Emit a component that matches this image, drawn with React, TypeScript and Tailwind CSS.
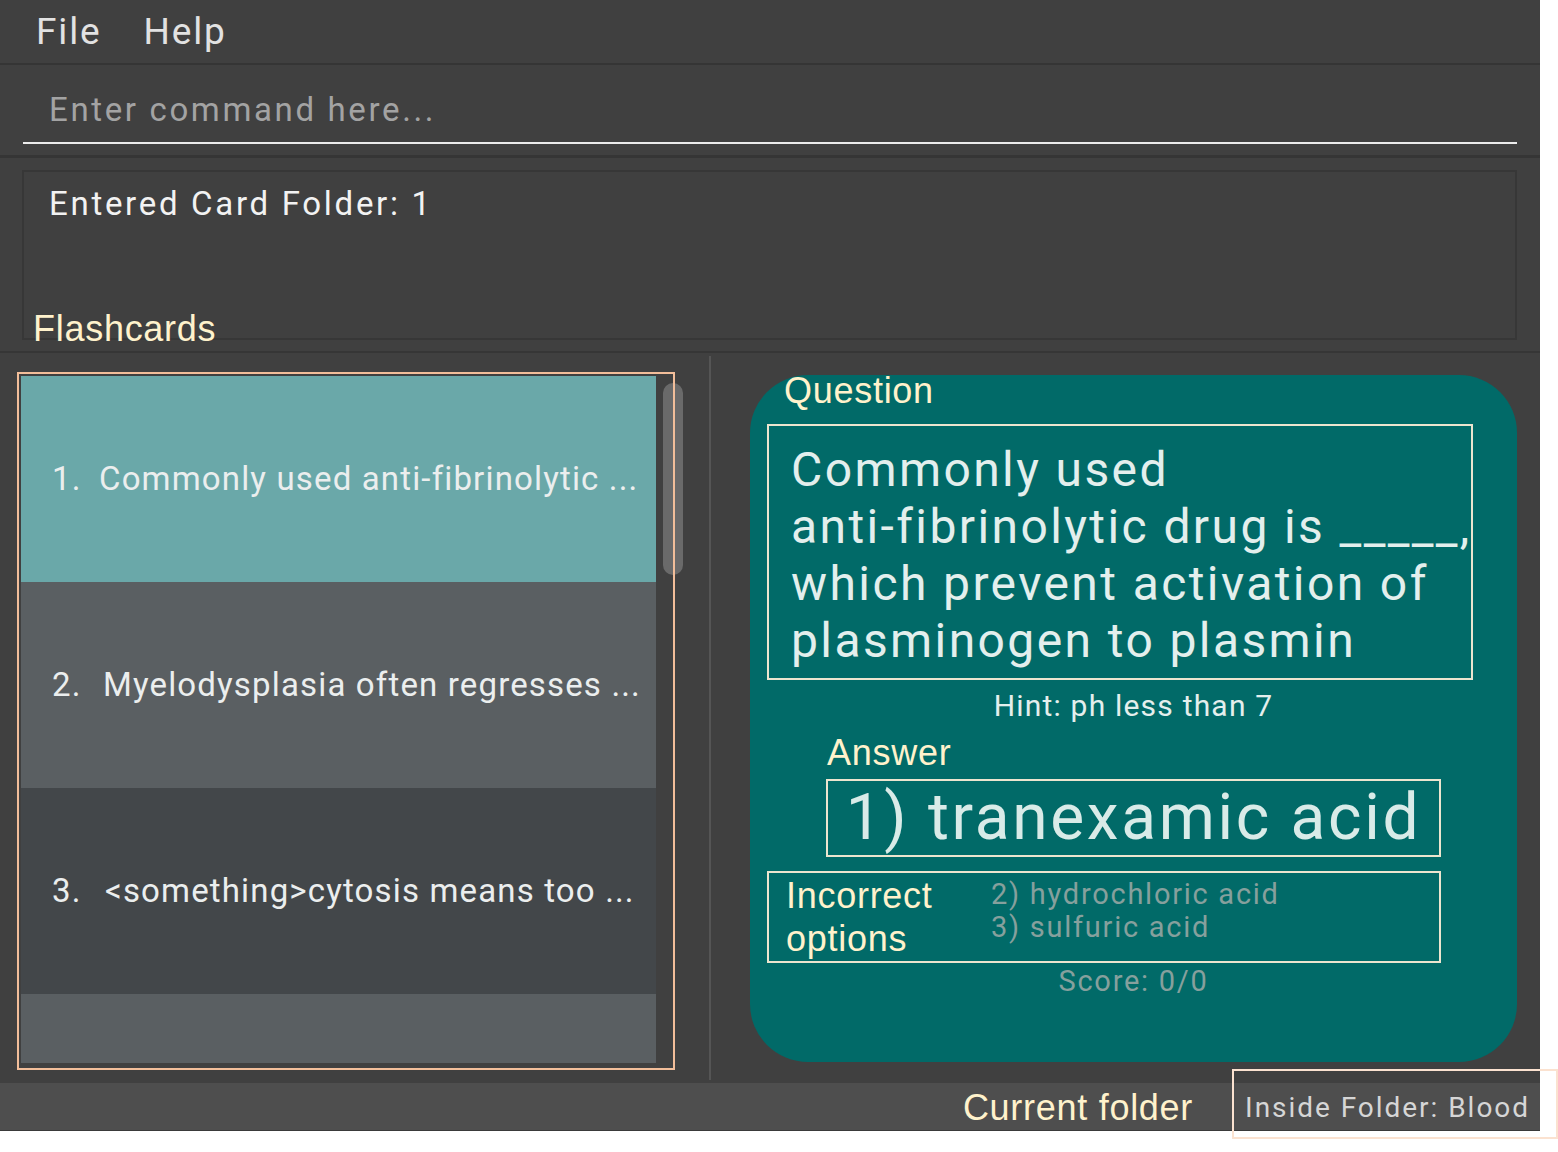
export default function App() {
  const ui = "[font-family:Roboto,'Liberation_Sans',Arial,sans-serif]";
  const label = "[font-family:'Liberation_Sans',Arial,sans-serif] text-[#fff2cc] text-[36px] leading-none tracking-[0.02em]";
  const cells = [
    { n: "1.", t: "Commonly used anti-fibrinolytic ...", bg: "bg-[#6aa8a9]", w: "w-[47px]" },
    { n: "2.", t: "Myelodysplasia often regresses ...", bg: "bg-[#5a5f62]", w: "w-[51px]" },
    { n: "3.", t: "<something>cytosis means too ...", bg: "bg-[#43474a]", w: "w-[53px]" },
  ];
  return (
    <div className={`relative w-[1558px] h-[1152px] bg-white overflow-hidden ${ui}`}>
      <div className="flex flex-col w-[1540px] h-[1131px] bg-[#404040]">
        {/* Menu bar */}
        <div className="h-[65px] shrink-0 flex items-center gap-[42px] pl-[36px] border-b-2 border-[#353535] text-[37px] tracking-[0.05em] text-[#e2e2e2]">
          <span>File</span>
          <span>Help</span>
        </div>

        {/* Command box */}
        <div className="h-[93px] shrink-0 px-[23px] pt-[25px] border-b-[3px] border-[#353535]">
          <div className="h-[54px] border-b-2 border-[#ececec] pl-[26px]">
            <div className="text-[33px] leading-[40px] tracking-[0.08em] text-[#a3a3a3]">Enter command here...</div>
          </div>
        </div>

        {/* Result display */}
        <div className="h-[195px] shrink-0 pt-[12px] pl-[22px] pr-[23px] border-b-2 border-[#363636]">
          <div className="h-[170px] border-2 border-[#373737] pl-[25px] pt-[12px]">
            <div className="text-[33px] leading-[40px] tracking-[0.082em] text-[#f2f2f2]">Entered Card Folder: 1</div>
          </div>
        </div>

        {/* Main area */}
        <div className="h-[730px] shrink-0 flex">
          {/* List panel */}
          <div className="relative w-[709px] shrink-0 pt-[23px] pl-[21px]">
            <div className="flex flex-col w-[635px]">
              {cells.map((c) => (
                <div key={c.n} className={`h-[206px] ${c.bg} flex items-center pl-[31px] text-[33px] tracking-[0.035em] text-[#ebeeee] whitespace-nowrap`}>
                  <span className={`${c.w} shrink-0`}>{c.n}</span>
                  <span>{c.t}</span>
                </div>
              ))}
              <div className="h-[69px] bg-[#5a5f62]" />
            </div>
            <div className="absolute left-[663px] top-[30px] w-[20px] h-[192px] rounded-full bg-[#6a6a6a]" />
            <div className="absolute left-[17px] top-[19px] w-[658px] h-[698px] border-2 border-[#f2be9a] pointer-events-none" />
          </div>

          {/* Divider */}
          <div className="w-[2px] shrink-0 my-[3px] bg-[#555555]" />

          {/* Card panel */}
          <div className="flex-1 pl-[39px] pt-[22px] pr-[23px] pb-[21px]">
            <div className="relative h-[687px] rounded-[58px] bg-[#016a68] flex flex-col items-start">
              <div className={`absolute left-[34px] top-[-2px] ${label}`}>Question</div>

              <div className="ml-[17px] mt-[49px] w-[706px] h-[256px] border-2 border-[#ece5cf] pl-[22px] pt-[15px] text-[48px] leading-[57px] tracking-[0.05em] text-[#e3efed] whitespace-nowrap">
                <div>Commonly used</div>
                <div>anti-fibrinolytic drug is _____,</div>
                <div>which prevent activation of</div>
                <div>plasminogen to plasmin</div>
              </div>

              <div className="w-full mt-[9px] text-center text-[30px] leading-[34px] tracking-[0.04em] text-[#e4efed]">Hint: ph less than 7</div>

              <div className={`ml-[77px] mt-[12px] ${label}`}>Answer</div>

              <div className="ml-[76px] mt-[8px] w-[615px] h-[78px] border-2 border-[#ece5cf] flex items-center justify-center text-[64px] leading-none tracking-[0.042em] text-[#d9ebe8]">
                1) tranexamic acid
              </div>

              <div className="ml-[17px] mt-[14px] w-[674px] h-[92px] border-2 border-[#ece5cf] flex">
                <div className="w-[222px] shrink-0 pl-[17px] pt-[1px] [font-family:'Liberation_Sans',Arial,sans-serif] text-[#fff2cc] text-[36px] leading-[43px] tracking-[0.02em]">
                  <div>Incorrect</div>
                  <div>options</div>
                </div>
                <div className="pt-[5px] text-[29px] leading-[33px] tracking-[0.06em] text-[#86a09d]">
                  <div>2) hydrochloric acid</div>
                  <div>3) sulfuric acid</div>
                </div>
              </div>

              <div className="w-full mt-[1px] text-center text-[29px] leading-[34px] tracking-[0.06em] text-[#86a09d]">Score: 0/0</div>
            </div>
          </div>
        </div>

        {/* Status bar */}
        <div className="flex-1 bg-[#4e4e4e] border-b border-[#3a3a3a] flex items-center justify-end pr-[10px] pt-[3px] gap-[52px]">
          <div className={label}>Current folder</div>
          <div className="text-[28px] leading-none tracking-[0.07em] text-[#d6d6d6]">Inside Folder: Blood</div>
        </div>
      </div>

      {/* Annotation overlays */}
      <div className={`absolute left-[33px] top-[311px] ${label}`}>Flashcards</div>
      <div className="absolute left-[1232px] top-[1069px] w-[326px] h-[70px] border-2 border-[#fbe2d0] pointer-events-none" />
    </div>
  );
}
